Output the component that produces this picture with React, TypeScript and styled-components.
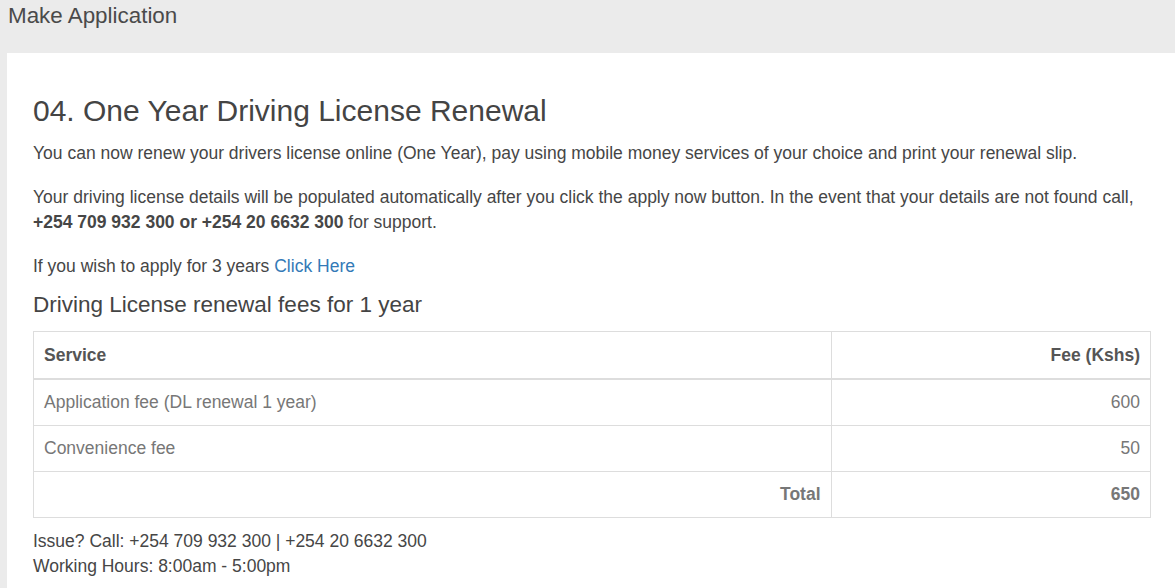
import * as React from "react";
import styled, { createGlobalStyle } from "styled-components";

const GlobalStyle = createGlobalStyle`
  html, body {
    margin: 0;
    padding: 0;
    background: #ebebeb;
    font-family: "Liberation Sans", Arial, sans-serif;
    color: #444;
  }
`;

const PageHeader = styled.div`
  height: 53px;
  padding: 3px 8px 0;
  box-sizing: border-box;
  font-size: 22.4px;
  line-height: 26px;
  color: #4a4a4a;
`;

const Panel = styled.div`
  margin-left: 7px;
  background: #fff;
  padding: 41px 24px 12px 26px;
  min-height: 535px;
  box-sizing: border-box;
`;

const Title = styled.h3`
  margin: 0 0 14px;
  font-size: 30px;
  font-weight: 400;
  line-height: 33px;
  color: #444;
`;

const Text = styled.p`
  margin: 0 0 19px;
  font-size: 17.5px;
  line-height: 25px;
  color: #464646;
`;

const Link = styled.a`
  color: #337ab7;
  text-decoration: none;
`;

const SubTitle = styled.h4`
  margin: -7px 0 13px;
  font-size: 22.5px;
  font-weight: 400;
  line-height: 27px;
  color: #444;
`;

const FeeTable = styled.table`
  width: 100%;
  border-collapse: collapse;
  border: 1px solid #ddd;
  margin-bottom: 11px;
  font-size: 17.5px;
`;

const Cell = styled.td<{ $right?: boolean; $bold?: boolean; $head?: boolean }>`
  border: 1px solid #ddd;
  padding: 0 10px;
  height: ${(p) => (p.$head ? "46px" : "45px")};
  text-align: ${(p) => (p.$right ? "right" : "left")};
  font-weight: ${(p) => (p.$bold ? 700 : 400)};
  color: ${(p) => (p.$head ? "#555" : "#777")};
  ${(p) => p.$head && "border-bottom-width: 2px;"}
`;

const Footer = styled.div`
  font-size: 17.5px;
  line-height: 25px;
  color: #464646;
`;

const rows = [
  { service: "Application fee (DL renewal 1 year)", fee: "600" },
  { service: "Convenience fee", fee: "50" },
];

export default function App() {
  return (
    <>
      <GlobalStyle />
      <PageHeader>Make Application</PageHeader>
      <Panel>
        <Title>04. One Year Driving License Renewal</Title>
        <Text>
          You can now renew your drivers license online (One Year), pay using mobile money services
          of your choice and print your renewal slip.
        </Text>
        <Text>
          Your driving license details will be populated automatically after you click the apply now
          button. In the event that your details are not found call,{" "}
          <b>+254 709 932 300 or +254 20 6632 300</b> for support.
        </Text>
        <Text>
          If you wish to apply for 3 years <Link href="#">Click Here</Link>
        </Text>
        <SubTitle>Driving License renewal fees for 1 year</SubTitle>
        <FeeTable>
          <tbody>
            <tr>
              <Cell $head $bold style={{ width: "71.4%" }}>
                Service
              </Cell>
              <Cell $head $bold $right>
                Fee (Kshs)
              </Cell>
            </tr>
            {rows.map((r) => (
              <tr key={r.service}>
                <Cell>{r.service}</Cell>
                <Cell $right>{r.fee}</Cell>
              </tr>
            ))}
            <tr>
              <Cell $right $bold>
                Total
              </Cell>
              <Cell $right $bold>
                650
              </Cell>
            </tr>
          </tbody>
        </FeeTable>
        <Footer>
          Issue? Call: +254 709 932 300 | +254 20 6632 300
          <br />
          Working Hours: 8:00am - 5:00pm
        </Footer>
      </Panel>
    </>
  );
}
